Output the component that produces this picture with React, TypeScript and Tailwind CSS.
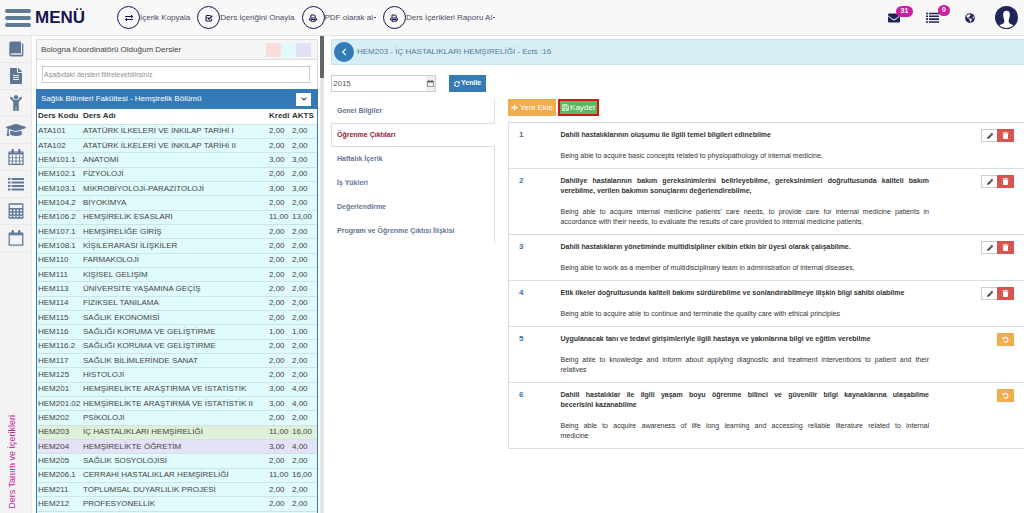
import React, { useState } from 'react';
import { clsx } from 'clsx';
import {
  FaChild,
  FaChevronLeft,
  FaChevronDown,
  FaEnvelope,
  FaExchangeAlt,
  FaFileAlt,
  FaGlobeAmericas,
  FaGraduationCap,
  FaPencilAlt,
  FaPlus,
  FaSyncAlt,
  FaTrash,
} from 'react-icons/fa';

interface IconProps {
  className?: string;
}

// --- Custom icons ---
const PrinterIcon = ({ className }: IconProps) => (
  <svg viewBox="0 0 16 16" fill="none" stroke="currentColor" strokeWidth="2" className={className}>
    <path d="M4 7.500V2h7l1.500 1.500v4" />
    <path d="M3.500 12H1V9.500q0-1.500 1.500-1.500h11Q15 8 15 9.500V12h-2.500" />
    <path d="M4 11h8.500v3.500H4z" />
  </svg>
);

const CheckBoxIcon = ({ className }: IconProps) => (
  <svg viewBox="0 0 16 16" fill="none" stroke="currentColor" strokeWidth="2.200" className={className}>
    <path d="M13 9.500v2.500q0 2-2 2H4q-2 0-2-2V5q0-2 2-2h7" />
    <path d="M5 7l3 3 6.500-6.500" strokeWidth="2.600" />
  </svg>
);

const UndoIcon = ({ className }: IconProps) => (
  <svg viewBox="0 0 16 16" fill="none" className={className}>
    <path d="M4 4.800A5.500 5.500 0 1 1 4 12.500" stroke="currentColor" strokeWidth="2.500" />
    <path d="M1 1.500v6h6z" fill="currentColor" />
  </svg>
);

const SaveIcon = ({ className }: IconProps) => (
  <svg viewBox="0 0 16 16" fill="none" stroke="currentColor" strokeWidth="1.800" className={className}>
    <path d="M1.500 1.500h10l3 3v10h-13z" />
    <path d="M4.500 1.500v4.500h6V1.500M4 14.500V10h8v4.500" />
  </svg>
);

const BookIcon = ({ className }: IconProps) => (
  <svg viewBox="0 0 16 16" className={className}>
    <path d="M3.500 0.500H13v11.500H4.200q-1.200 0-1.200 1t1.200 1H14V2.500h1.300V14q0 1.500-1.500 1.500H4Q1.300 15.500 1.300 13V2.700Q1.300.5 3.500.5z" fill="currentColor" />
    <path d="M4 13h9.500" stroke="currentColor" strokeWidth="0.600" />
  </svg>
);

const ListIcon = ({ className }: IconProps) => (
  <svg viewBox="0 0 16 16" fill="currentColor" className={className}>
    <path d="M0 2h2.500v2H0zM0 5.500h2.500v2H0zM0 9h2.500v2H0zM0 12.500h2.500v2H0z" />
    <path d="M3.700 2H16v2H3.700zM3.700 5.500H16v2H3.700zM3.700 9H16v2H3.700zM3.700 12.500H16v2H3.700z" />
  </svg>
);

const CalendarGridIcon = ({ className }: IconProps) => (
  <svg viewBox="0 0 16 16" fill="none" stroke="currentColor" className={className}>
    <path d="M1 3h14v12.300H1z" strokeWidth="1.200" strokeLinejoin="round" />
    <path d="M1 4.500h14" strokeWidth="1.800" />
    <path d="M4.500 5.500v9.500M8 5.500v9.500M11.500 5.500v9.500M1 8.800h14M1 12h14" strokeWidth="0.800" />
    <path d="M4.700 1.200v2.500M11.300 1.200v2.500" strokeWidth="2.400" strokeLinecap="round" />
  </svg>
);

const CalculatorIcon = ({ className }: IconProps) => (
  <svg viewBox="0 0 16 16" fill="none" stroke="currentColor" className={className}>
    <path d="M1.200 1h13.600v14H1.200z" strokeWidth="1.300" strokeLinejoin="round" />
    <path d="M1 5.800h14" strokeWidth="1.600" />
    <path d="M4.600 6V15M8 6V15M11.400 6V15M1 9h14M1 12h14" strokeWidth="1.300" />
  </svg>
);

const CalendarIcon = ({ className }: IconProps) => (
  <svg viewBox="0 0 16 16" fill="none" stroke="currentColor" className={className}>
    <path d="M1.200 3h13.600v12.200H1.200z" strokeWidth="1.200" strokeLinejoin="round" />
    <path d="M1 4.300h14" strokeWidth="2" />
    <path d="M4.700 1.200v2.500M11.300 1.200v2.500" strokeWidth="2.400" strokeLinecap="round" />
  </svg>
);

const AvatarIcon = ({ className }: IconProps) => (
  <svg viewBox="0 0 24 24" className={className}>
    <circle cx="12" cy="12" r="12" fill="#1f2557" />
    <path
      d="M12 5c2.400 0 3.500 1.500 3.500 3.800 0 3-1 4.700-1.200 6.200-.2 2.200.5 3 2.200 3.700 1.100.5 2.200 1 2.900 1.700A11 11 0 0 1 12 23a11 11 0 0 1-7.400-2.600c.7-.7 1.800-1.200 2.900-1.700 1.700-.7 2.400-1.500 2.200-3.700-.2-1.500-1.200-3.200-1.200-6.200C8.500 6.500 9.600 5 12 5z"
      fill="#fff"
    />
  </svg>
);

// --- Data ---
const topActions = [
  { label: 'İçerik Kopyala', icon: FaExchangeAlt },
  { label: 'Ders İçeriğini Onayla', icon: CheckBoxIcon },
  { label: 'PDF olarak al', icon: PrinterIcon, menu: true },
  { label: 'Ders İçerikleri Raporu Al', icon: PrinterIcon, menu: true },
];

const sideItems = [
  { title: 'Dersler', icon: BookIcon },
  { title: 'Belgeler', icon: FaFileAlt },
  { title: 'Öğrenci', icon: FaChild },
  { title: 'Mezuniyet', icon: FaGraduationCap },
  { title: 'Takvim', icon: CalendarGridIcon },
  { title: 'Liste', icon: ListIcon },
  { title: 'Hesaplama', icon: CalculatorIcon },
  { title: 'Program', icon: CalendarIcon },
];

const courses = [
  ['ATA101', 'ATATÜRK İLKELERİ VE İNKILAP TARİHİ I', '2,00', '2,00'],
  ['ATA102', 'ATATÜRK İLKELERİ VE İNKILAP TARİHİ II', '2,00', '2,00'],
  ['HEM101.1', 'ANATOMİ', '3,00', '3,00'],
  ['HEM102.1', 'FİZYOLOJİ', '2,00', '2,00'],
  ['HEM103.1', 'MİKROBİYOLOJİ-PARAZİTOLOJİ', '3,00', '3,00'],
  ['HEM104.2', 'BİYOKİMYA', '2,00', '2,00'],
  ['HEM106.2', 'HEMŞİRELİK ESASLARI', '11,00', '13,00'],
  ['HEM107.1', 'HEMŞİRELİĞE GİRİŞ', '2,00', '2,00'],
  ['HEM108.1', 'KİŞİLERARASI İLİŞKİLER', '2,00', '2,00'],
  ['HEM110', 'FARMAKOLOJİ', '2,00', '2,00'],
  ['HEM111', 'KİŞİSEL GELİŞİM', '2,00', '2,00'],
  ['HEM113', 'ÜNİVERSİTE YAŞAMINA GEÇİŞ', '2,00', '2,00'],
  ['HEM114', 'FİZİKSEL TANILAMA', '2,00', '2,00'],
  ['HEM115', 'SAĞLIK EKONOMİSİ', '2,00', '2,00'],
  ['HEM116', 'SAĞLIĞI KORUMA VE GELİŞTİRME', '1,00', '1,00'],
  ['HEM116.2', 'SAĞLIĞI KORUMA VE GELİŞTİRME', '2,00', '2,00'],
  ['HEM117', 'SAĞLIK BİLİMLERİNDE SANAT', '2,00', '2,00'],
  ['HEM125', 'HİSTOLOJİ', '2,00', '2,00'],
  ['HEM201', 'HEMŞİRELİKTE ARAŞTIRMA VE İSTATİSTİK', '3,00', '4,00'],
  ['HEM201.02', 'HEMŞİRELİKTE ARAŞTIRMA VE İSTATİSTİK II', '3,00', '4,00'],
  ['HEM202', 'PSİKOLOJİ', '2,00', '2,00'],
  ['HEM203', 'İÇ HASTALIKLARI HEMŞİRELİĞİ', '11,00', '16,00'],
  ['HEM204', 'HEMŞİRELİKTE ÖĞRETİM', '3,00', '4,00'],
  ['HEM205', 'SAĞLIK SOSYOLOJİSİ', '2,00', '2,00'],
  ['HEM206.1', 'CERRAHİ HASTALIKLAR HEMŞİRELİĞİ', '11,00', '16,00'],
  ['HEM211', 'TOPLUMSAL DUYARLILIK PROJESİ', '2,00', '2,00'],
  ['HEM212', 'PROFESYONELLİK', '2,00', '2,00'],
];

const tabs = [
  'Genel Bilgiler',
  'Öğrenme Çıktıları',
  'Haftalık İçerik',
  'İş Yükleri',
  'Değerlendirme',
  'Program ve Öğrenme Çıktısı İlişkisi',
];

// One entry per printed line
const outcomes = [
  {
    tr: ['Dahili hastalıklarının oluşumu ile ilgili temel bilgileri edinebilme'],
    en: ['Being able to acquire basic concepts related to physiopathology of internal medicine,'],
  },
  {
    tr: [
      'Dahiliye hastalarının bakım gereksinimlerini belirleyebilme, gereksinimleri doğrultusunda kaliteli bakım',
      'verebilme, verilen bakımın sonuçlarını değerlendirebilme,',
    ],
    en: [
      "Being able to acquire internal medicine patients' care needs, to provide care for internal medicine patients in",
      'accordance with their needs, to evaluate the results of care provided to internal medicine patients,',
    ],
  },
  {
    tr: ['Dahili hastalıkların yönetiminde multidisipliner ekibin etkin bir üyesi olarak çalışabilme.'],
    en: ['Being able to work as a member of multidisciplinary team in administration of internal diseases,'],
  },
  {
    tr: ['Etik ilkeler doğrultusunda kaliteli bakımı sürdürebilme ve sonlandırabilmeye ilişkin bilgi sahibi olabilme'],
    en: ['Being able to acquire able to continue and terminate the quality care with ethical principles'],
  },
  {
    tr: ['Uygulanacak tanı ve tedavi girişimleriyle ilgili hastaya ve yakınlarına bilgi ve eğitim verebilme'],
    en: [
      'Being able to knowledge and inform about applying diagnostic and treatment interventions to patient and their',
      'relatives',
    ],
    added: true,
  },
  {
    tr: [
      'Dahili hastalıklar ile ilgili yaşam boyu öğrenme bilinci ve güvenilir bilgi kaynaklarına ulaşabilme',
      'becerisini kazanabilme',
    ],
    en: [
      'Being able to acquire awareness of life long learning and accessing reliable literature related to internal',
      'medicine',
    ],
    added: true,
  },
];

// --- Top bar ---
const TopBar = () => (
  <header className="flex h-9 shrink-0 items-center border-b border-[#e4e4e4] bg-[#f8f8f8]">
    <button className="flex w-[117px] items-center gap-1 pl-[5px] text-[17px] font-bold text-[#14144f]">
      <span className="flex w-[26px] flex-col gap-[3px]">
        <span className="h-1 rounded-full bg-[#5f7b95]" />
        <span className="h-1 rounded-full bg-[#5f7b95]" />
        <span className="h-1 rounded-full bg-[#5f7b95]" />
      </span>
      MENÜ
    </button>

    <nav className="flex items-center gap-[7px]">
      {topActions.map(({ label, icon: Icon, menu }) => (
        <button key={label} className="flex items-center text-[8px] text-[#4a4a60]">
          <span className="flex size-[23px] items-center justify-center rounded-full border border-[#14144f] text-[#14144f]">
            <Icon className="size-2" />
          </span>
          {label}
          {menu && <span className="ml-px h-px w-[2px] bg-[#3f3f5a]" />}
        </button>
      ))}
    </nav>

    <div className="ml-auto flex items-center pr-[6px] text-[#1f2557]">
      <button className="relative mr-[26px]" aria-label="Mesajlar">
        <FaEnvelope className="size-3" />
        <span className="absolute -top-[6px] left-2 flex h-[11px] w-[17px] items-center justify-center rounded-full bg-[#cc1fa5] text-[7px] font-bold text-white">
          31
        </span>
      </button>
      <button className="relative mr-[26px]" aria-label="Görevler">
        <ListIcon className="size-[13px]" />
        <span className="absolute -top-[6px] left-3 flex h-[11px] w-3 items-center justify-center rounded-full bg-[#cc1fa5] text-[7px] font-bold text-white">
          0
        </span>
      </button>
      <button className="mr-5" aria-label="Dil">
        <FaGlobeAmericas className="size-[10px]" />
      </button>
      <button aria-label="Profil">
        <AvatarIcon className="size-[23px]" />
      </button>
    </div>
  </header>
);

// --- Icon rail ---
const SideBar = () => (
  <aside className="flex w-8 shrink-0 flex-col justify-between border-r border-[#e9e9e9] bg-[#f3f3f3]">
    <nav className="flex flex-col">
      {sideItems.map(({ title, icon: Icon }) => (
        <button
          key={title}
          aria-label={title}
          className="flex h-[27px] items-center justify-center border-b border-[#e9e9e9] text-[#5d7896]"
        >
          <Icon className={title === 'Mezuniyet' ? 'size-5' : 'size-4'} />
        </button>
      ))}
    </nav>
    <span className="mb-1 ml-1 rotate-180 self-start text-[9px] leading-4 text-[#c2209c] [writing-mode:vertical-rl]">
      Ders Tanım ve İçerikleri
    </span>
  </aside>
);

// --- Course list ---
const CoursePanel = () => (
  <section className="flex w-[282px] shrink-0 flex-col">
    <div className="flex h-[21px] items-center justify-between border border-[#dddddd] bg-[#f5f5f5] pr-[6px] pl-1">
      <h2 className="text-[8px] text-[#444444]">Bologna Koordinatörü Olduğum Dersler</h2>
      <div className="flex">
        <span className="h-[14px] w-[15px] bg-[#fbdedc]" />
        <span className="h-[14px] w-[15px] bg-[#defafa]" />
        <span className="h-[14px] w-[15px] bg-[#e1e0f6]" />
      </div>
    </div>
    <div className="border-x border-[#dddddd] py-[6px] pr-[7px] pl-[5px]">
      <input
        type="text"
        aria-label="Dersleri filtrele"
        placeholder="Aşağıdaki dersleri filtreleyebilirsiniz"
        className="block h-[17px] w-full border border-[#cccccc] bg-white px-px text-[7px] placeholder:text-[#8f8f8f]"
      />
    </div>
    <div className="flex grow flex-col border-x border-[#337ab7] bg-[#e0fbfb]">
      <div className="flex h-5 shrink-0 items-center justify-between bg-[#337ab7] pr-[6px] pl-1 text-white">
        <h3 className="text-[8px]">Sağlık Bilimleri Fakültesi - Hemşirelik Bölümü</h3>
        <button
          aria-label="Daralt"
          className="flex h-[13px] w-[15px] items-center justify-center bg-white text-[#333333]"
        >
          <FaChevronDown className="size-[6px]" />
        </button>
      </div>
      <table className="h-[402px] w-full table-fixed text-left text-[8px] leading-[12px] text-[#444444]">
        <thead>
          <tr className="h-[15px] bg-white text-[#333333]">
            <th className="w-[46px] p-0 pl-px">Ders Kodu</th>
            <th className="p-0">Ders Adı</th>
            <th className="w-[23px] p-0">Kredi</th>
            <th className="w-[25px] p-0">AKTS</th>
          </tr>
        </thead>
        <tbody>
          {courses.map(([code, name, credit, akts]) => (
            <tr
              key={code}
              className={clsx(
                'border-t border-[#cfe3e3]',
                code === 'HEM203' && 'bg-[#dff0d8]',
                code === 'HEM204' && 'bg-[#e4e2f7]'
              )}
            >
              <td className="p-0 pl-px">{code}</td>
              <td className="p-0">{name}</td>
              <td className="p-0">{credit}</td>
              <td className="p-0">{akts}</td>
            </tr>
          ))}
        </tbody>
      </table>
      <div className="border-t border-[#cfe3e3]" />
    </div>
  </section>
);

// --- Learning outcomes ---
const Lines = ({ lines, className }: { lines: string[]; className?: string }) => (
  <p className={className}>
    {lines.map((line, i) => (
      <span key={line} className={clsx('block', i < lines.length - 1 && '[text-align-last:justify]')}>
        {line}
      </span>
    ))}
  </p>
);

const OutcomeTable = () => (
  <div className="min-w-0 grow">
    <div className="flex items-center gap-[2px]">
      <button className="flex h-[17px] items-center gap-[2px] bg-[#f0ad4e] px-[3px] text-[8px] text-white">
        <FaPlus className="size-[7px]" />
        Yeni Ekle
      </button>
      <button className="flex h-[17px] items-center gap-px border-2 border-[#d0161b] bg-[#5cb85c] px-[2px] text-[8px] text-white">
        <SaveIcon className="size-[7px]" />
        Kaydet
      </button>
    </div>
    <table className="mt-[6px] w-full border-t border-l border-[#dddddd] text-[7px] leading-[10px] text-[#333333]">
      <tbody>
        {outcomes.map(({ tr, en, added }, i) => (
          <tr key={tr[0]} className="border-b border-[#dddddd] align-top">
            <td className="w-[52px] py-[7px] pr-0 pl-[10px] text-[8px] font-bold text-[#41719c]">{i + 1}</td>
            <td className="py-[7px]">
              <Lines lines={tr} className="font-bold" />
              <Lines lines={en} className="mt-[11px]" />
            </td>
            <td className="w-[95px] py-[6px] pr-[10px]">
              <div className="flex justify-end">
                {added ? (
                  <button
                    aria-label="Geri al"
                    className="flex h-[13px] w-[17px] items-center justify-center bg-[#f0ad4e] text-white"
                  >
                    <UndoIcon className="size-[7px]" />
                  </button>
                ) : (
                  <>
                    <button
                      aria-label="Düzenle"
                      className="flex h-[13px] w-4 items-center justify-center border border-r-0 border-[#cccccc] bg-white text-[#333333]"
                    >
                      <FaPencilAlt className="size-[6px]" />
                    </button>
                    <button
                      aria-label="Sil"
                      className="flex h-[13px] w-[17px] items-center justify-center bg-[#d9534f] text-white"
                    >
                      <FaTrash className="size-[7px]" />
                    </button>
                  </>
                )}
              </div>
            </td>
          </tr>
        ))}
      </tbody>
    </table>
  </div>
);

export default function App() {
  const [activeTab, setActiveTab] = useState('Öğrenme Çıktıları');
  const [year, setYear] = useState('2015');

  return (
    <div className="flex h-screen flex-col overflow-hidden bg-white font-['Liberation_Sans',Arial,sans-serif]">
      <TopBar />
      <div className="flex min-h-0 grow">
        <SideBar />
        <div className="flex shrink-0 overflow-hidden pt-[3px] pl-1">
          <CoursePanel />
        </div>

        {/* Scroll track of the course list */}
        <div className="ml-[2px] w-1 shrink-0 bg-[#e6e6e6]">
          <div className="h-[42px] bg-[#666666]" />
        </div>

        <main className="min-w-0 grow pt-[3px] pl-[7px]">
          <div className="flex h-[26px] items-center gap-[3px] border border-r-0 border-[#c5e4ee] bg-[#d9edf7] pl-[2px] text-[#4b7f99]">
            <button
              aria-label="Geri"
              className="flex size-5 items-center justify-center rounded-full bg-[#337ab7] text-white"
            >
              <FaChevronLeft className="size-2" />
            </button>
            <h1 className="text-[8px]">HEM203 - İÇ HASTALIKLARI HEMŞİRELİĞİ - Ects :16</h1>
          </div>

          <div className="mt-[10px] flex">
            <div className="flex h-[17px] w-[105px] border border-[#cccccc]">
              <input
                type="text"
                aria-label="Yıl"
                value={year}
                onChange={(e) => setYear(e.target.value)}
                className="min-w-0 grow px-px text-[8px] text-[#555555]"
              />
              <button
                aria-label="Takvimi aç"
                className="flex w-[11px] items-center justify-center bg-[#eeeeee] text-[#444444]"
              >
                <CalendarIcon className="size-[7px]" />
              </button>
            </div>
            <button className="ml-[13px] flex h-[17px] items-center gap-px bg-[#337ab7] px-[5px] text-[7px] font-bold text-white">
              <FaSyncAlt className="size-[6px]" />
              Yenile
            </button>
          </div>

          <div className="mt-[7px] flex items-start">
            <nav className="mr-[13px] flex w-[164px] shrink-0 flex-col">
              {tabs.map((tab) => (
                <button
                  key={tab}
                  onClick={() => setActiveTab(tab)}
                  className={clsx(
                    'h-6 border-[#dddddd] text-left text-[7px] font-bold',
                    tab === activeTab
                      ? 'border-y border-l pl-[5px] text-[#8f1d33]'
                      : 'border-r pl-[6px] text-[#5d7896]'
                  )}
                >
                  {tab}
                </button>
              ))}
            </nav>
            <OutcomeTable />
          </div>
        </main>
      </div>
    </div>
  );
}
